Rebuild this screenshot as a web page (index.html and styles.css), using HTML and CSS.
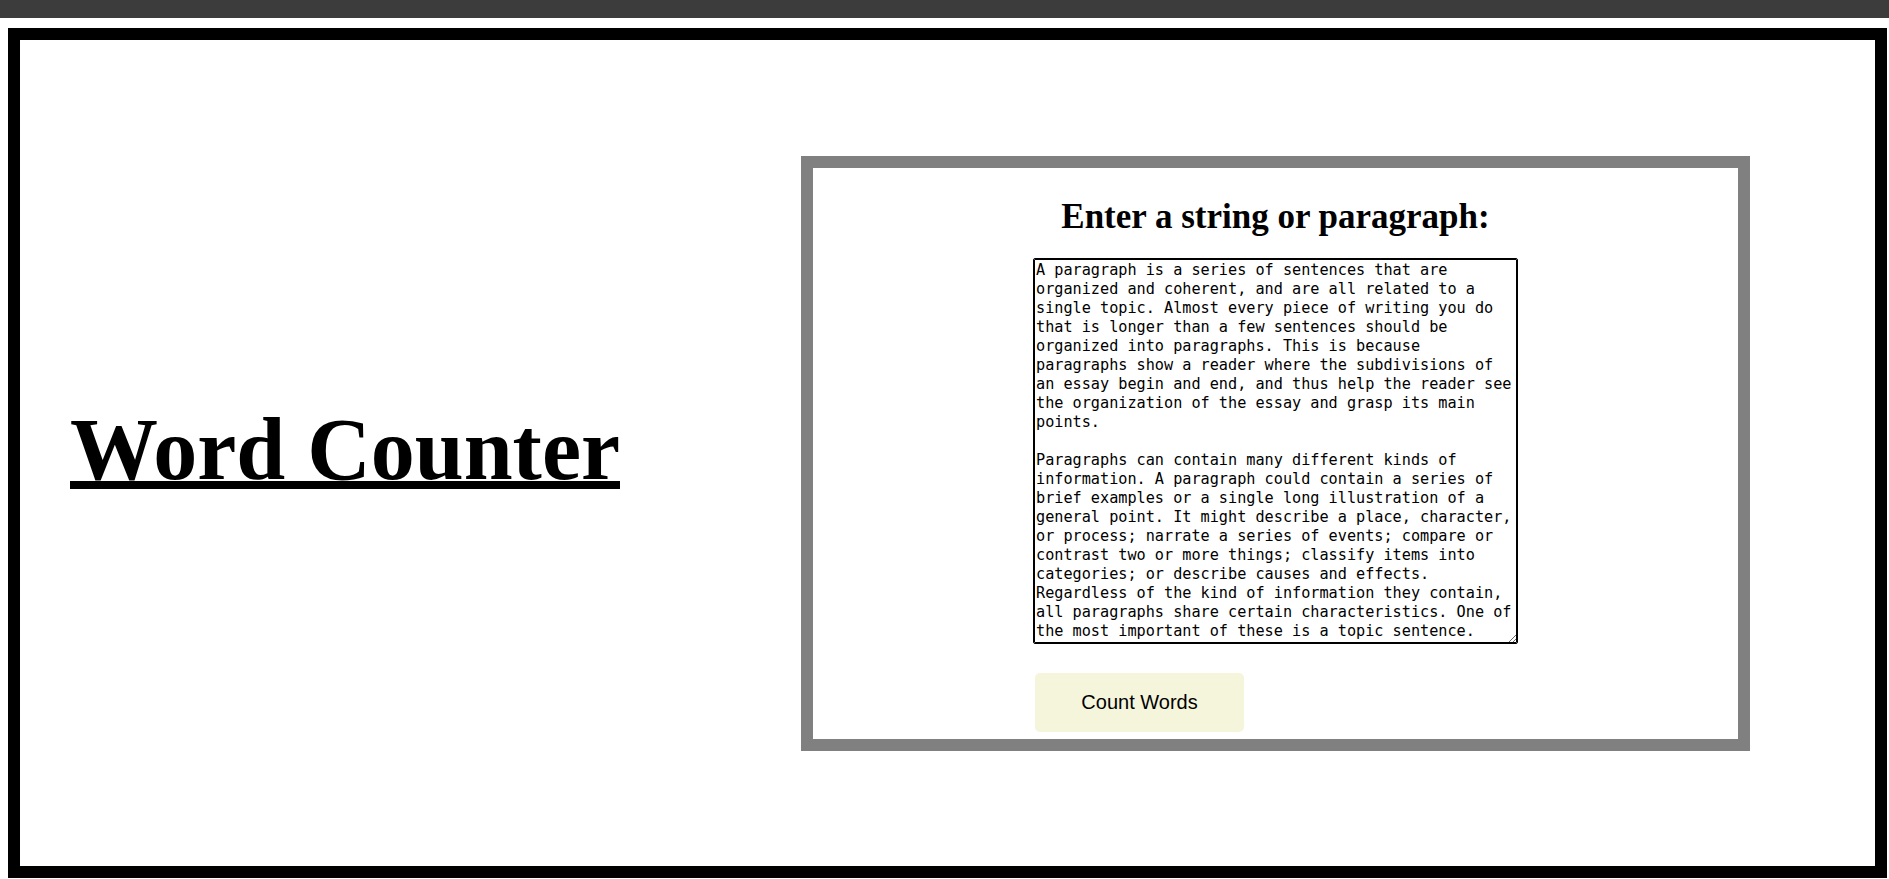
FILE: index.html
```html
<!DOCTYPE html>
<html lang="en">
<head>
<meta charset="utf-8">
<title>Word Counter</title>
<link rel="stylesheet" href="styles.css">
</head>
<body>
<div class="topbar"></div>
<main class="frame">
  <h1 class="title">Word Counter</h1>
  <section class="card">
    <h2 class="card-title">Enter a string or paragraph:</h2>
    <form class="form">
      <textarea class="input">A paragraph is a series of sentences that are organized and coherent, and are all related to a single topic. Almost every piece of writing you do that is longer than a few sentences should be organized into paragraphs. This is because paragraphs show a reader where the subdivisions of an essay begin and end, and thus help the reader see the organization of the essay and grasp its main points.

Paragraphs can contain many different kinds of information. A paragraph could contain a series of brief examples or a single long illustration of a general point. It might describe a place, character, or process; narrate a series of events; compare or contrast two or more things; classify items into categories; or describe causes and effects. Regardless of the kind of information they contain, all paragraphs share certain characteristics. One of the most important of these is a topic sentence.</textarea>
      <button type="button" class="btn">Count Words</button>
    </form>
  </section>
</main>
</body>
</html>
```
FILE: styles.css
```css
html, body {
  margin: 0;
  padding: 0;
  background: #ffffff;
}

body {
  font-family: "Liberation Serif", "Times New Roman", serif;
  color: #000;
}

.topbar {
  height: 18px;
  background: #3c3c3c;
}

.frame {
  box-sizing: border-box;
  margin: 10px 0 0 8px;
  width: 1879px;
  height: 850px;
  border: 12px solid #000;
  display: flex;
  align-items: center;
  justify-content: space-between;
  padding: 0 125px 0 50px;
}

.title {
  margin: 0 0 8px;
  font-family: "Liberation Serif", "Times New Roman", serif;
  font-weight: bold;
  font-size: 88px;
  line-height: normal;
  text-decoration: underline;
  text-underline-offset: 2px;
}

.card {
  box-sizing: border-box;
  width: 949px;
  height: 595px;
  border: 12px solid #808080;
  display: flex;
  flex-direction: column;
  align-items: center;
  padding: 29px 0 7px;
}

.card-title {
  margin: 0;
  font-family: "Liberation Serif", "Times New Roman", serif;
  font-weight: bold;
  font-size: 35px;
  line-height: 40px;
}

.form {
  margin-top: 21px;
  width: 485px;
  display: flex;
  flex-direction: column;
  align-items: flex-start;
  gap: 29px;
}

.input {
  box-sizing: border-box;
  width: 485px;
  height: 386px;
  margin: 0;
  padding: 2px;
  border: 1px solid #000;
  border-radius: 2px;
  outline: 1px solid #000;
  outline-offset: -2px;
  font-family: "DejaVu Sans Mono", "Liberation Mono", monospace;
  font-size: 15.2px;
  line-height: 19px;
  color: #000;
  background: #fff;
  overflow: hidden;
  resize: both;
}

.btn {
  margin: 0 0 0 2px;
  width: 209px;
  height: 59px;
  border: none;
  border-radius: 5px;
  background: #f5f5dc;
  font-family: "Liberation Sans", Arial, sans-serif;
  font-size: 20px;
  color: #000;
  padding: 0;
}
```
